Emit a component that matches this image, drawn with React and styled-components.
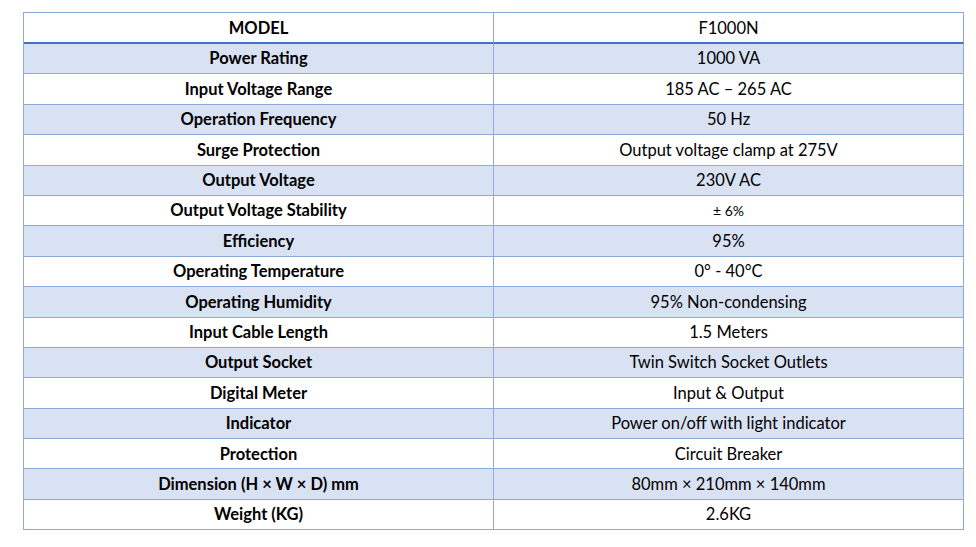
import React from 'react';
import styled, { createGlobalStyle } from 'styled-components';

const GlobalStyle = createGlobalStyle`
  html, body {
    margin: 0;
    padding: 0;
    background: #ffffff;
  }
  body {
    font-family: Lato, "Liberation Sans", sans-serif;
    color: #000000;
  }
`;

const Page = styled.div`
  width: 976px;
  height: 547px;
  padding: 12px 0 0 23px;
  box-sizing: border-box;
  background: #ffffff;
`;

const SpecTable = styled.table`
  width: 941px;
  border-collapse: separate;
  border-spacing: 0;
  table-layout: fixed;
  font-size: 16.5px;
  border-top: 1px solid #8eaadb;
  border-left: 1px solid #8eaadb;
`;

const Row = styled.tr`
  background: ${props => (props.$shaded ? '#d9e2f3' : '#ffffff')};
`;

const HeadCell = styled.th`
  padding: 0;
  font-weight: ${props => (props.$bold ? 700 : 400)};
  border-right: 1px solid #8eaadb;
  border-bottom: 2px solid #4472c4;
`;

const Cell = styled.td`
  padding: 0;
  font-weight: ${props => (props.$bold ? 700 : 400)};
  font-size: ${props => (props.$small ? '14px' : 'inherit')};
  border-right: 1px solid #8eaadb;
  border-bottom: 1px solid #8eaadb;
`;

const CellText = styled.div`
  box-sizing: border-box;
  height: ${props => (props.$head ? '29px' : '29.4px')};
  padding-top: ${props => (props.$head ? '2px' : '0')};
  display: flex;
  align-items: center;
  justify-content: center;
  line-height: 1;
`;

const specs = [
  ['Power Rating', '1000 VA'],
  ['Input Voltage Range', '185 AC – 265 AC'],
  ['Operation Frequency', '50 Hz'],
  ['Surge Protection', 'Output voltage clamp at 275V'],
  ['Output Voltage', '230V AC'],
  ['Output Voltage Stability', '± 6%', true],
  ['Efficiency', '95%'],
  ['Operating Temperature', '0° - 40°C'],
  ['Operating Humidity', '95% Non-condensing'],
  ['Input Cable Length', '1.5 Meters'],
  ['Output Socket', 'Twin Switch Socket Outlets'],
  ['Digital Meter', 'Input & Output'],
  ['Indicator', 'Power on/off with light indicator'],
  ['Protection', 'Circuit Breaker'],
  ['Dimension (H × W × D) mm', '80mm × 210mm × 140mm'],
  ['Weight (KG)', '2.6KG'],
];

const App = () => {
  return (
    <Page>
      <GlobalStyle />
      <SpecTable>
        <colgroup>
          <col style={{ width: '470px' }} />
          <col style={{ width: '470px' }} />
        </colgroup>
        <thead>
          <Row>
            <HeadCell $bold><CellText $head>MODEL</CellText></HeadCell>
            <HeadCell><CellText $head>F1000N</CellText></HeadCell>
          </Row>
        </thead>
        <tbody>
          {specs.map(([label, value, small], i) => (
            <Row key={label} $shaded={i % 2 === 0}>
              <Cell $bold><CellText>{label}</CellText></Cell>
              <Cell $small={small}><CellText>{value}</CellText></Cell>
            </Row>
          ))}
        </tbody>
      </SpecTable>
    </Page>
  );
};

export default App;
